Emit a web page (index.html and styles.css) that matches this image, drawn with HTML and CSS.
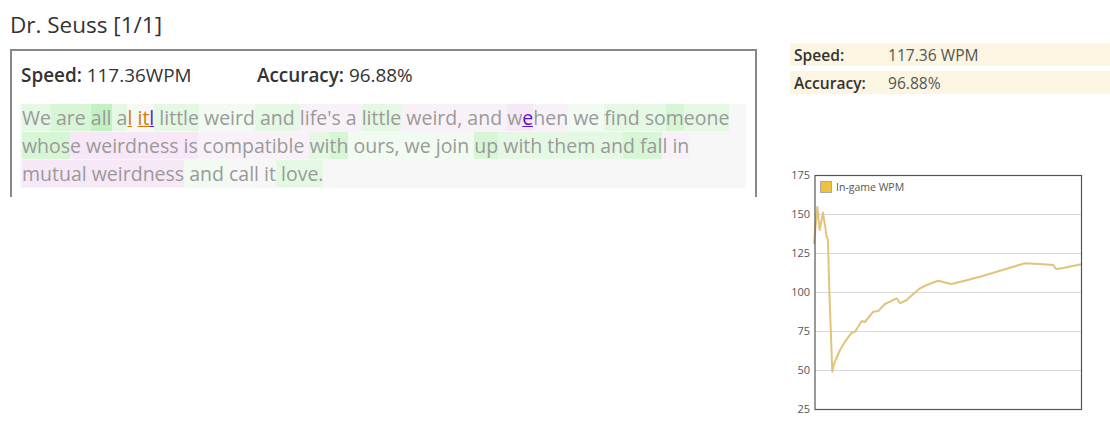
FILE: index.html
```html
<!DOCTYPE html>
<html>
<head>
<meta charset="utf-8">
<link rel="stylesheet" href="styles.css">
</head>
<body>
<div class="page">
  <div class="left">
    <h1 class="title">Dr. Seuss [1/1]</h1>
    <div class="box">
      <div class="stats">
        <span class="stat"><b>Speed:</b> 117.36WPM</span>
        <span class="stat"><b>Accuracy:</b> 96.88%</span>
      </div>
      <div class="quote"><span class="g1">We</span><span class="g2"> are </span><span class="g3">all</span><span class="g1"> a</span><span class="err">l</span><span class="g0"> </span><span class="err">it</span><span class="err2">l</span><span class="g1"> little</span><span class="g0"> weird</span><span class="g1"> and </span><span class="p0">life's a </span><span class="g1">little</span><span class="p0"> weird, and </span><span class="p1">w</span><span class="err2 p1">e</span><span class="p0">hen</span><span class="g0"> we </span><span class="g1">find so</span><span class="g2">m</span><span class="g1">eone</span>
<span class="g2">whos</span><span class="p1">e weirdness is</span><span class="p0"> compatible </span><span class="g1">wi</span><span class="g2">th</span><span class="g0"> ours, we join </span><span class="g2">up</span><span class="g1"> with them </span><span class="g1">an</span><span class="g2">d fal</span><span class="p0">l in</span>
<span class="p1">mutual weirdness</span><span class="g0"> and </span><span class="n">call it</span><span class="g1"> love.</span></div>
    </div>
  </div>
  <div class="right">
    <div class="summary">
      <div class="row"><span class="label">Speed:</span><span class="value">117.36 WPM</span></div>
      <div class="row"><span class="label">Accuracy:</span><span class="value">96.88%</span></div>
    </div>
    <svg class="chart" width="320" height="260" viewBox="790 165 320 260">
      <g class="grid">
        <line x1="815" y1="214.5" x2="1081" y2="214.5"/>
        <line x1="815" y1="253.5" x2="1081" y2="253.5"/>
        <line x1="815" y1="292.5" x2="1081" y2="292.5"/>
        <line x1="815" y1="331.5" x2="1081" y2="331.5"/>
        <line x1="815" y1="370.5" x2="1081" y2="370.5"/>
      </g>
      <g class="ylab">
        <text x="810" y="179">175</text>
        <text x="810" y="218">150</text>
        <text x="810" y="257">125</text>
        <text x="810" y="296">100</text>
        <text x="810" y="335">75</text>
        <text x="810" y="374">50</text>
        <text x="810" y="413">25</text>
      </g>
      <polyline class="wpm" points="814,244 817.3,207 819.7,230 823,212.7 826.7,236.7 828,240 829.3,290 832.3,371.7 834.3,363 840,350 845,341.7 851.7,332.7 855,331.7 861.7,321 865,322 873.3,311.7 878.3,311 885,304 896.7,298.3 900,303.3 906.7,300 913.3,294 920,288.3 926.7,285 938.3,280.7 943.3,282 946.7,283 951.7,284 956.7,282.7 966.7,280.3 980,276.7 996.7,271.7 1013.3,266.7 1025,263.3 1043.3,264.3 1053.3,265 1056,269 1063.3,268 1081,264.3"/>
      <rect class="frame" x="815" y="175.5" width="266.5" height="234"/>
      <rect class="legend-box" x="820.5" y="181.5" width="11" height="11"/>
      <text class="legend" x="836" y="191">In-game WPM</text>
    </svg>
  </div>
</div>
</body>
</html>
```
FILE: styles.css
```css
html, body {
  margin: 0;
  padding: 0;
  background: #fff;
}
body {
  font-family: "Open Sans", "Noto Sans", sans-serif;
  color: #333;
}
.page {
  display: flex;
  width: 1110px;
  height: 433px;
  overflow: hidden;
}
.left {
  width: 747px;
  padding-left: 10px;
  flex: none;
}
.title {
  margin: 11px 0 0;
  font-size: 22.5px;
  font-weight: normal;
  line-height: 28px;
  color: #333;
}
.box {
  margin-top: 10px;
  border: 2px solid #888;
  border-bottom: none;
  height: 146px;
  padding: 0 8px 0 8px;
}
.stats {
  display: flex;
  height: 48px;
  margin-bottom: 5px;
  align-items: center;
  font-size: 18.9px;
  color: #333;
}
.stat:first-child {
  width: 236px;
  padding-left: 1px;
}
.stat b {
  font-weight: 600;
}
.quote {
  background: #f7f7f7;
  font-size: 19.5px;
  line-height: 28px;
  color: #9a9a9a;
  padding: 0 2px;
  white-space: pre-line;
  width: 722px;
  height: 84px;
}
.g0 { background: #f1fbf1; }
.g1 { background: #e4f8e4; }
.g2 { background: #d6f6d6; }
.g3 { background: #c2f1c2; }
.p0 { background: #f8f2f8; }
.p1 { background: #f7e8f7; }
.n { background: #f7f7f7; }
.err {
  color: #d77a00;
  text-decoration: underline;
  background: #f7f7f7;
}
.err2 {
  color: #5a16c8;
  text-decoration: underline;
}
.right {
  margin-left: 33px;
  width: 320px;
  flex: none;
}
.summary {
  margin-top: 43px;
}
.row {
  display: flex;
  align-items: center;
  height: 23px;
  background: #fcf5e1;
  margin-bottom: 5px;
  font-size: 15.6px;
}
.label {
  width: 94px;
  padding-left: 4px;
  font-weight: 600;
  color: #333;
}
.value {
  color: #555;
}
.chart {
  display: block;
  margin-top: 71px;
}
.grid line {
  stroke: #d8d8d8;
  stroke-width: 1;
}
.ylab text {
  font-family: "Open Sans", sans-serif;
  font-size: 11px;
  fill: #555;
  text-anchor: end;
}
.wpm {
  fill: none;
  stroke: #e0c47c;
  stroke-width: 2;
  stroke-linejoin: round;
}
.frame {
  fill: none;
  stroke: #555;
  stroke-width: 1.2;
}
.legend-box {
  fill: #f0c13c;
  stroke: #aaa;
  stroke-width: 1;
}
.legend {
  font-family: "Open Sans", sans-serif;
  font-size: 10.5px;
  fill: #555;
}
```
